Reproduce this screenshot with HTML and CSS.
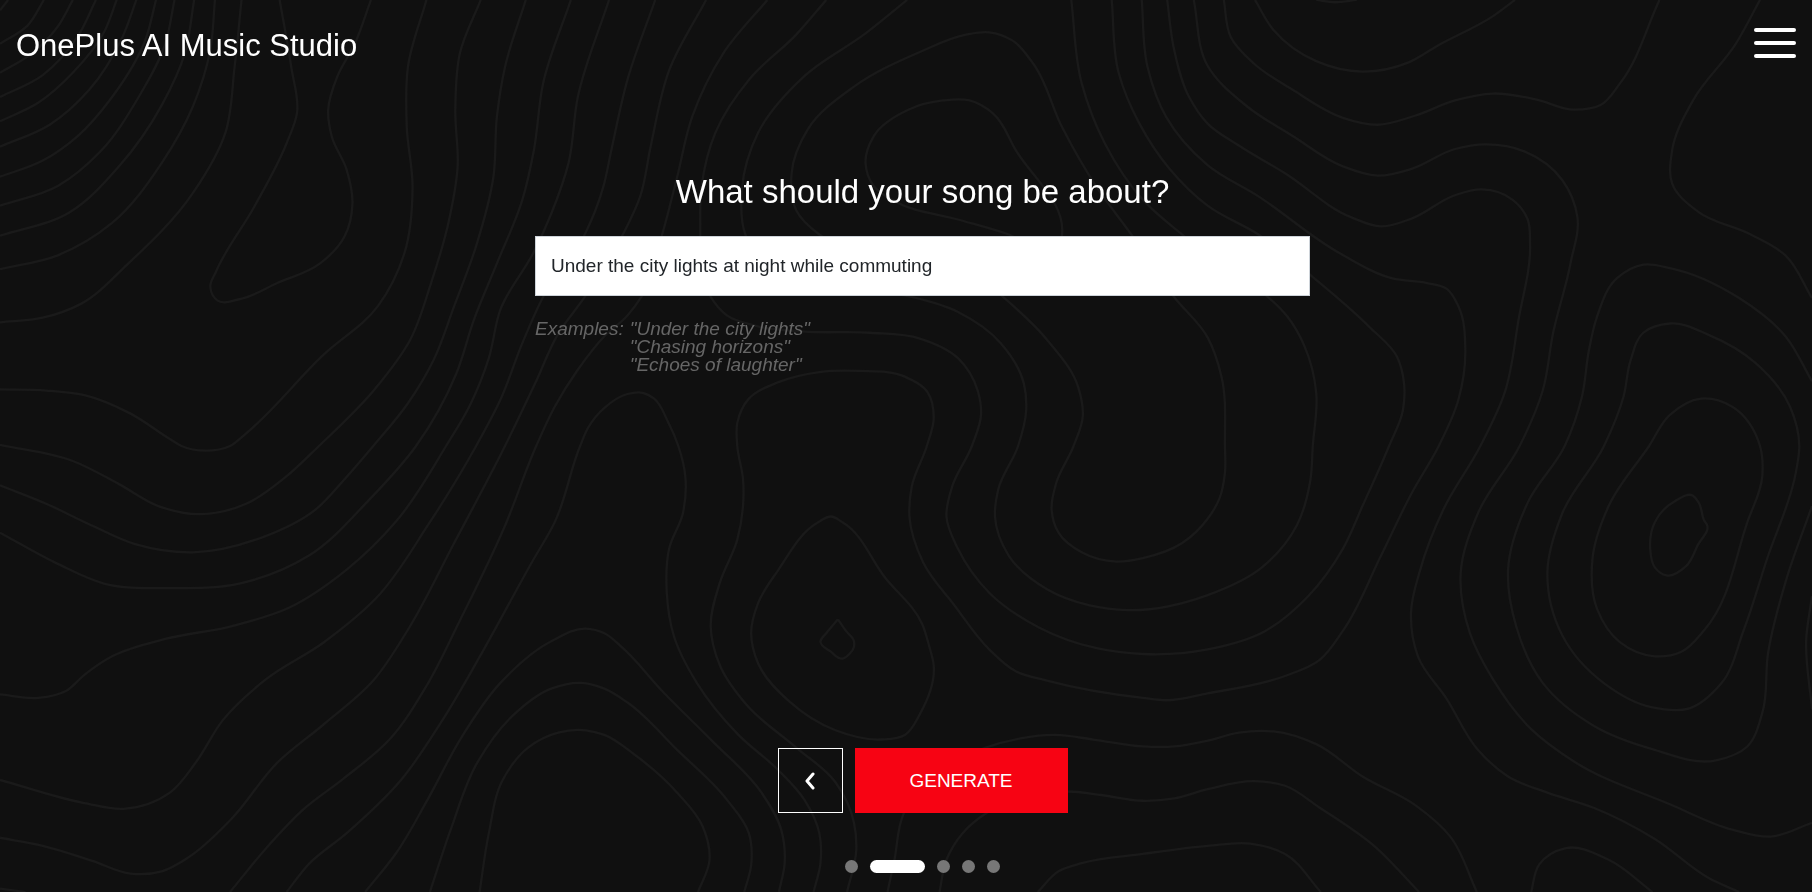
FILE: index.html
```html
<!DOCTYPE html>
<html lang="en">
<head>
    <meta charset="UTF-8">
    <meta name="viewport" content="width=device-width, initial-scale=1.0">
    <title>OnePlus AI Music Studio</title>
    <link rel="stylesheet" href="styles.css">
</head>
<body>
    <svg class="contours" id="contours" viewBox="0 0 1568 772" preserveAspectRatio="xMidYMid slice" aria-hidden="true"></svg>

    <div class="page">
        <header class="header">
            <h1 class="logo">OnePlus AI Music Studio</h1>
            <button class="menu-btn" type="button" aria-label="Menu">
                <span></span>
                <span></span>
                <span></span>
            </button>
        </header>

        <main class="content">
            <form class="step" id="songForm">
                <label class="question" for="topic">What should your song be about?</label>
                <input class="topic" type="text" id="topic" name="topic" value="Under the city lights at night while commuting">
                <div class="examples">
                    <span>Examples:</span>
                    <ul>
                        <li>"Under the city lights"</li>
                        <li>"Chasing horizons"</li>
                        <li>"Echoes of laughter"</li>
                    </ul>
                </div>
                <div class="actions">
                    <button class="back-btn" type="button" aria-label="Back">
                        <svg width="10" height="18" viewBox="0 0 10 18">
                            <path d="M8 2 L2 9 L8 16" />
                        </svg>
                    </button>
                    <button class="generate-btn" type="submit">GENERATE</button>
                </div>
            </form>
            <ul class="dots">
                <li></li>
                <li class="active"></li>
                <li></li>
                <li></li>
                <li></li>
            </ul>
        </main>
    </div>

    <script src="contours.js"></script>
</body>
</html>
```
FILE: styles.css
```css
* {
    box-sizing: border-box;
}
body {
    margin: 0;
    background-color: #101010;
    color: #fff;
    font-family: "Liberation Sans", Arial, sans-serif;
}
ul {
    list-style: none;
    margin: 0;
    padding: 0;
}
button {
    font-family: inherit;
    cursor: pointer;
}

/* background lines */
.contours {
    position: fixed;
    top: 0;
    left: 0;
    width: 100%;
    height: 100%;
    z-index: -1;
}
.contours path {
    fill: none;
    stroke: #1a1a1a;
    stroke-width: 2;
}

.page {
    min-height: 100vh;
    display: flex;
    flex-direction: column;
}
.header {
    display: flex;
    justify-content: space-between;
    align-items: flex-start;
    padding: 28px 16px 0;
}
.logo {
    margin: 0;
    font-size: 31px;
    font-weight: 400;
    line-height: 36px;
}
.menu-btn {
    display: flex;
    flex-direction: column;
    gap: 9px;
    padding: 0;
    background: none;
    border: none;
}
.menu-btn span {
    width: 42px;
    height: 4px;
    background: #fff;
    border-radius: 2px;
}

.content {
    flex: 1;
    display: flex;
    flex-direction: column;
    align-items: center;
    padding: 108px 0 19px 33px;
}
.step {
    flex: 1;
    width: 100%;
    max-width: 775px;
    display: flex;
    flex-direction: column;
}
.question {
    font-size: 33px;
    line-height: 40px;
    text-align: center;
    margin-bottom: 24px;
}
.topic {
    width: 100%;
    height: 60px;
    padding: 0 15px;
    border: 1px solid #ced4da;
    border-radius: 0;
    background: #fff;
    color: #212529;
    font-family: inherit;
    font-size: 19px;
}
.examples {
    display: flex;
    gap: 6px;
    margin-top: 24px;
    color: #666;
    font-size: 19px;
    font-style: italic;
    line-height: 18px;
}
.actions {
    display: flex;
    justify-content: center;
    gap: 12px;
    margin-top: auto;
}
.back-btn {
    display: flex;
    align-items: center;
    justify-content: center;
    width: 65px;
    height: 65px;
    padding: 0;
    background: none;
    border: 1px solid #fff;
}
.back-btn path {
    fill: none;
    stroke: #fff;
    stroke-width: 3;
    stroke-linecap: round;
    stroke-linejoin: round;
}
.generate-btn {
    width: 213px;
    height: 65px;
    background: #f70313;
    border: none;
    color: #fff;
    font-size: 19px;
}
.dots {
    display: flex;
    gap: 12px;
    margin-top: 47px;
}
.dots li {
    width: 13px;
    height: 13px;
    border-radius: 7px;
    background: #777;
}
.dots .active {
    width: 55px;
    background: #fff;
}
```
FILE: contours.js
```js
// Each entry is one contour line: x,y pairs. A trailing "z" closes the line.
const lines = [
    // top left rings
    "7,0 0,9",
    "38,0 24,22 0,38",
    "63,0 50,23 28,46 0,63",
    "83,0 67,32 37,65 0,84",
    "101,0 90,28 63,63 33,89 0,105",
    "118,0 106,32 77,78 43,108 0,127",
    "135,0 126,34 97,84 67,118 37,139 0,153",
    "151,0 143,38 120,84 87,131 50,161 0,178",
    "168,0 160,46 140,91 103,144 60,184 0,204",
    "186,0 182,43 167,92 140,141 97,193 50,221 0,233",
    "209,0 203,58 195,115 167,167 110,229 70,263 37,275 0,279",
    "242,0 252,58 257,98 248,124 220,179 187,235 182,248 188,260 207,259 240,245 277,228 298,205 305,176 300,147 287,118 284,95 292,66 307,38 321,0",

    // long lines from the top edge to the left edge
    "369,0 353,58 352,110 357,162 350,219 327,265 280,307 213,375 199,386 178,390 157,386 147,380 113,358 73,342 40,338 0,337",
    "416,0 398,46 394,95 396,144 388,193 373,245 355,294 325,336 276,386 247,413 213,436 173,445 137,438 103,419 63,399 0,385",
    "455,0 437,58 430,101 427,153 412,213 393,265 375,312 353,349 323,386 297,416 273,441 227,465 167,478 117,471 80,455 40,436 0,420",
    "494,0 470,72 462,130 452,173 430,228 410,277 395,323 360,386 320,432 267,481 207,505 147,509 90,505 50,488 0,461",
    "527,0 500,84 492,141 477,185 462,218 433,268 423,310 407,350 386,386 343,451 300,493 250,526 200,542 143,553 97,568 73,584 57,598 33,604 0,601",
    "567,0 543,69 529,130 522,162 506,203 470,257 452,297 433,346 412,386 370,455 327,516 280,556 230,588 193,623 170,659 147,686 107,700 73,695 0,675",
    "611,0 579,61 563,127 554,170 539,203 506,257 483,289 463,332 437,386 393,470 353,545 323,589 280,627 240,660 200,709 163,742 140,754 113,756 80,745 37,732 0,725",
    "664,0 626,46 599,101 586,153 573,203 555,257 543,273 523,291 500,320 480,352 464,386 437,455 397,539 370,592 337,640 297,674 263,700 233,731 199,772",
    "248,772 267,748 300,721 347,675 383,623 417,565 460,487 480,452 502,386 509,370 523,353 543,341 556,340 566,345 578,365 587,386 593,412 591,444 579,475 577,513 583,550 603,591 639,636 673,666 696,692 709,721 710,747 704,772",
    "0,769 22,772",

    // bottom left hill
    "316,772 343,738 370,692 400,637 433,591 477,555 507,544 523,548 539,561 573,598 616,641 659,686 676,718 679,747 674,772",
    "372,772 390,718 413,660 443,620 477,596 503,591 523,596 543,608 586,649 629,692 648,721 650,749 644,772",
    "415,772 423,721 435,675 457,647 483,634 507,632 523,636 549,653 586,686 608,715 614,744 604,772",

    // middle
    "715,0 689,30 649,68 619,115 607,162 606,203 606,232 615,257 629,273 654,282 696,287 753,288 796,293 829,310 846,338 849,358 841,386 824,421 819,447 829,475 856,513 899,543 949,561 989,566 1045,562 1095,546 1132,516 1162,475 1179,438 1202,386 1214,355 1215,332 1209,309 1185,283 1135,239 1089,203 1045,178 1012,146 986,107 968,63 962,0",
    "733,772 741,735 739,712 723,677 689,647 646,610 623,576 615,542 623,504 638,467 643,415 638,386 638,366 648,345 673,331 709,322 743,321 783,326 803,340 808,361 802,386 789,421 787,447 799,487 826,524 856,562 879,581 906,589 989,604 1009,606 1045,600 1112,585 1142,571 1162,546 1195,481 1222,426 1245,386 1262,346 1268,303 1262,265 1252,250 1235,245 1205,241 1159,219 1089,170 1045,143 1009,101 993,58 988,0",
    "785,0 749,29 696,66 656,115 642,164 645,203 665,232 720,248 789,257 829,270 866,297 886,332 888,355 881,386 864,423 861,447 873,481 906,510 943,524 976,528 1045,515 1092,491 1122,455 1134,415 1136,386 1139,340 1129,300 1114,274 1096,256 1060,232 1023,203 989,173 956,124 936,72 927,0",
    "709,203 689,182 685,150 699,112 739,75 796,45 836,30 856,28 876,35 894,55 919,110 949,162 979,203 1016,257 1045,292 1057,326 1060,386 1060,409 1055,432 1045,449 1023,470 989,483 966,486 936,478 916,461 910,441 914,418 929,386 937,360 933,335 906,294 867,256 830,225 760,220z",
    "873,203 829,190 776,175 756,161 749,141 756,118 786,95 816,87 839,87 859,98 879,130 919,203 915,220z",
    "719,447 729,452 766,500 798,540 804,559 808,576 796,618 783,636 763,640 723,632 683,607 656,574 650,548 656,522 673,494 708,452z",
    "725,536 732,546 739,555 739,560 735,566 729,570 719,564 710,555 715,548 725,536",

    // top right
    "1010,0 1016,43 1029,84 1045,107 1072,126 1112,150 1169,188 1195,196 1222,189 1259,169 1282,164 1309,173 1322,190 1324,211 1314,277 1302,340 1281,386 1249,441 1229,493 1221,530 1227,568 1252,605 1279,649 1305,672 1339,686 1379,699 1432,726 1479,760 1505,772",
    "1033,0 1045,57 1079,92 1119,118 1162,144 1192,152 1222,146 1259,129 1285,125 1319,131 1352,156 1365,188 1359,228 1344,288 1335,338 1315,386 1279,444 1264,496 1272,548 1292,588 1325,631 1362,659 1445,696 1499,718 1532,724 1568,712",
    "1059,0 1065,32 1085,55 1119,78 1162,102 1192,108 1225,100 1259,87 1292,81 1329,86 1362,95 1385,91 1402,72 1436,0",
    "1086,0 1102,26 1139,53 1179,62 1219,54 1245,39 1292,14 1311,0",
    "1139,0 1155,2 1174,0",
    "1523,0 1502,38 1465,87 1447,130 1447,159 1469,183 1515,203 1545,221 1568,258",

    // right hill
    "1568,330 1545,291 1505,258 1445,232 1422,229 1399,241 1382,274 1375,303 1369,343 1354,386 1322,435 1305,493 1312,542 1335,591 1379,628 1429,648 1485,658 1512,646 1525,617 1530,565 1545,504 1568,438",
    "1557,386 1549,352 1519,314 1479,290 1445,280 1422,288 1411,312 1405,343 1388,386 1352,444 1339,496 1352,550 1389,592 1429,612 1462,613 1489,592 1509,545 1529,484 1554,409z",
    "1427,386 1445,359 1472,345 1499,352 1523,386 1525,412 1512,452 1475,545 1455,564 1432,568 1402,556 1382,527 1378,484 1392,438z",
    "1465,429 1470,435 1475,451 1477,454 1469,472 1459,490 1442,498 1432,491 1428,475 1432,452 1449,434z",
    "1568,516 1563,553 1568,614",

    // bottom right
    "1325,772 1332,748 1355,734 1392,744 1430,772",
    "813,772 819,744 833,721 853,704 885,690 924,685 953,688 989,693 1016,691 1045,683 1085,676 1112,680 1142,699 1189,732 1228,772",
    "768,772 774,744 782,704 810,670 853,647 883,639 913,636 946,640 989,646 1016,646 1045,641 1072,634 1102,633 1139,644 1179,672 1225,697 1255,724 1278,772",
    "898,772 916,754 936,747 989,739 1045,732 1082,730 1112,739 1143,772"
];

// Smooth curve that goes through every point. Handles are a third of the
// segment they belong to, so short and long segments join without kinks.
function toPath(line) {
    const closed = line.endsWith("z");
    const pts = line.replace("z", "").split(" ").map(p => p.split(",").map(Number));
    const n = pts.length;
    const at = i => closed ? pts[(i + n) % n] : pts[Math.min(Math.max(i, 0), n - 1)];
    const dist = (p, q) => Math.hypot(q[0] - p[0], q[1] - p[1]);

    // unit tangent at point i, leaning towards the shorter neighbour segment
    function tangent(i) {
        const [p, q, r] = [at(i - 1), at(i), at(i + 1)];
        const l1 = dist(p, q) || Infinity;
        const l2 = dist(q, r) || Infinity;
        const x = (q[0] - p[0]) / (l1 * l1) + (r[0] - q[0]) / (l2 * l2);
        const y = (q[1] - p[1]) / (l1 * l1) + (r[1] - q[1]) / (l2 * l2);
        const len = Math.hypot(x, y);
        return [x / len, y / len];
    }

    let d = `M${pts[0]}`;
    for (let i = 0; i < (closed ? n : n - 1); i++) {
        const [b, c] = [at(i), at(i + 1)];
        const [t1, t2] = [tangent(i), tangent(i + 1)];
        const h = dist(b, c) / 3;
        d += ` C${b[0] + t1[0] * h},${b[1] + t1[1] * h}`;
        d += ` ${c[0] - t2[0] * h},${c[1] - t2[1] * h} ${c}`;
    }
    return d;
}

const svg = document.getElementById("contours");
lines.forEach(line => {
    const path = document.createElementNS("http://www.w3.org/2000/svg", "path");
    path.setAttribute("d", toPath(line));
    svg.appendChild(path);
});
```
